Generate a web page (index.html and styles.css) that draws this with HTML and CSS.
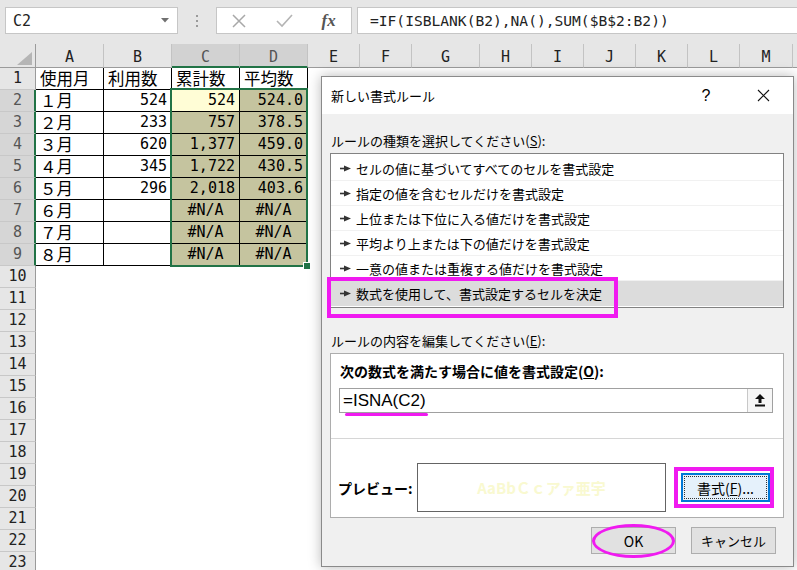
FILE: index.html
```html
<!DOCTYPE html>
<html lang="ja">
<head>
<meta charset="utf-8">
<title>新しい書式ルール</title>
<link rel="stylesheet" href="styles.css">
</head>
<body>
<div class="fbar">
  <div class="namebox"><span class="nb-text">C2</span><svg class="nb-arrow" width="8" height="5" viewBox="0 0 8 5"><polygon points="0,0 8,0 4,4.5" fill="#707070"/></svg></div>
  <div class="grip"><i></i><i></i><i></i></div>
  <div class="fxbox">
    <span class="slot"><svg width="16" height="16" viewBox="0 0 16 16"><path d="M2 2 L14 14 M14 2 L2 14" stroke="#a8a8a8" stroke-width="1.5" fill="none"/></svg></span>
    <span class="slot"><svg width="17" height="15" viewBox="0 0 17 15"><path d="M1 8 L6 13 L16 2" stroke="#b4b4b4" stroke-width="1.6" fill="none"/></svg></span>
    <span class="slot"><span class="fx">fx</span></span>
  </div>
  <div class="formula">=IF(ISBLANK(B2),NA(),SUM($B$2:B2))</div>
</div>

<div class="sheet">
  <div class="row hrow">
    <div class="corner"><svg width="15" height="13" viewBox="0 0 15 13"><polygon points="15,0 15,13 0,13" fill="#b5b5b5"/></svg></div>
    <div class="ch w68">A</div><div class="ch w68">B</div><div class="ch w68 sel">C</div><div class="ch w68 sel">D</div>
    <div class="ch w52">E</div><div class="ch w52">F</div><div class="ch w68">G</div><div class="ch w52">H</div>
    <div class="ch w52">I</div><div class="ch w52">J</div><div class="ch w52">K</div><div class="ch w52">L</div><div class="ch w53">M</div><div class="ch fill"></div>
  </div>
  <div class="row"><div class="rh">1</div><div class="c w68 bd">使用月</div><div class="c w68 bd">利用数</div><div class="c w68 bd">累計数</div><div class="c w68 bd">平均数</div><div class="fill"></div></div>
  <div class="row"><div class="rh sel">2</div><div class="c w68 bd">１月</div><div class="c w68 bd num">524</div><div class="c w68 bd num act">524</div><div class="c w68 bd num ol">524.0</div><div class="fill"></div></div>
  <div class="row"><div class="rh sel">3</div><div class="c w68 bd">２月</div><div class="c w68 bd num">233</div><div class="c w68 bd num ol">757</div><div class="c w68 bd num ol">378.5</div><div class="fill"></div></div>
  <div class="row"><div class="rh sel">4</div><div class="c w68 bd">３月</div><div class="c w68 bd num">620</div><div class="c w68 bd num ol">1,377</div><div class="c w68 bd num ol">459.0</div><div class="fill"></div></div>
  <div class="row"><div class="rh sel">5</div><div class="c w68 bd">４月</div><div class="c w68 bd num">345</div><div class="c w68 bd num ol">1,722</div><div class="c w68 bd num ol">430.5</div><div class="fill"></div></div>
  <div class="row"><div class="rh sel">6</div><div class="c w68 bd">５月</div><div class="c w68 bd num">296</div><div class="c w68 bd num ol">2,018</div><div class="c w68 bd num ol">403.6</div><div class="fill"></div></div>
  <div class="row"><div class="rh sel">7</div><div class="c w68 bd">６月</div><div class="c w68 bd"></div><div class="c w68 bd err ol">#N/A</div><div class="c w68 bd err ol">#N/A</div><div class="fill"></div></div>
  <div class="row"><div class="rh sel">8</div><div class="c w68 bd">７月</div><div class="c w68 bd"></div><div class="c w68 bd err ol">#N/A</div><div class="c w68 bd err ol">#N/A</div><div class="fill"></div></div>
  <div class="row"><div class="rh sel">9</div><div class="c w68 bd">８月</div><div class="c w68 bd"></div><div class="c w68 bd err ol">#N/A</div><div class="c w68 bd err ol">#N/A</div><div class="fill"></div></div>
  <div class="row"><div class="rh">10</div><div class="fill"></div></div>
  <div class="row"><div class="rh">11</div><div class="fill"></div></div>
  <div class="row"><div class="rh">12</div><div class="fill"></div></div>
  <div class="row"><div class="rh">13</div><div class="fill"></div></div>
  <div class="row"><div class="rh">14</div><div class="fill"></div></div>
  <div class="row"><div class="rh">15</div><div class="fill"></div></div>
  <div class="row"><div class="rh">16</div><div class="fill"></div></div>
  <div class="row"><div class="rh">17</div><div class="fill"></div></div>
  <div class="row"><div class="rh">18</div><div class="fill"></div></div>
  <div class="row"><div class="rh">19</div><div class="fill"></div></div>
  <div class="row"><div class="rh">20</div><div class="fill"></div></div>
  <div class="row"><div class="rh">21</div><div class="fill"></div></div>
  <div class="row"><div class="rh">22</div><div class="fill"></div></div>
  <div class="row"><div class="rh">23</div><div class="fill"></div></div>
  <div class="selection"></div>
  <div class="handle"></div>
</div>

<div class="dialog">
  <div class="dlg-title">
    <span class="dlg-name">新しい書式ルール</span>
    <span class="dlg-help">?</span>
    <span class="dlg-close"><svg width="13" height="13" viewBox="0 0 13 13"><path d="M1 1 L12 12 M12 1 L1 12" stroke="#111" stroke-width="1.1" fill="none"/></svg></span>
  </div>
  <div class="dlg-body">
    <div class="lbl">ルールの種類を選択してください(<u>S</u>):</div>
    <ul class="rule-list">
      <li><svg class="tri" width="11" height="7" viewBox="0 0 11 7"><rect x="0" y="2.7" width="5" height="1.6" fill="#333"/><polygon points="4,0.5 11,3.5 4,6.5" fill="#333"/></svg>セルの値に基づいてすべてのセルを書式設定</li>
      <li><svg class="tri" width="11" height="7" viewBox="0 0 11 7"><rect x="0" y="2.7" width="5" height="1.6" fill="#333"/><polygon points="4,0.5 11,3.5 4,6.5" fill="#333"/></svg>指定の値を含むセルだけを書式設定</li>
      <li><svg class="tri" width="11" height="7" viewBox="0 0 11 7"><rect x="0" y="2.7" width="5" height="1.6" fill="#333"/><polygon points="4,0.5 11,3.5 4,6.5" fill="#333"/></svg>上位または下位に入る値だけを書式設定</li>
      <li><svg class="tri" width="11" height="7" viewBox="0 0 11 7"><rect x="0" y="2.7" width="5" height="1.6" fill="#333"/><polygon points="4,0.5 11,3.5 4,6.5" fill="#333"/></svg>平均より上または下の値だけを書式設定</li>
      <li><svg class="tri" width="11" height="7" viewBox="0 0 11 7"><rect x="0" y="2.7" width="5" height="1.6" fill="#333"/><polygon points="4,0.5 11,3.5 4,6.5" fill="#333"/></svg>一意の値または重複する値だけを書式設定</li>
      <li class="picked"><svg class="tri" width="11" height="7" viewBox="0 0 11 7"><rect x="0" y="2.7" width="5" height="1.6" fill="#333"/><polygon points="4,0.5 11,3.5 4,6.5" fill="#333"/></svg>数式を使用して、書式設定するセルを決定</li>
    </ul>
    <div class="lbl lbl2">ルールの内容を編集してください(<u>E</u>):</div>
    <div class="panel">
      <div class="panel-top">
        <div class="blbl">次の数式を満たす場合に値を書式設定(<u>O</u>):</div>
        <div class="input">
          <span class="input-text">=ISNA(C2)</span>
          <span class="collapse"><svg width="10" height="13" viewBox="0 0 10 13"><polygon points="5,0 10,5 6.5,5 6.5,9 3.5,9 3.5,5 0,5" fill="#111"/><rect x="0" y="10.5" width="10" height="2" fill="#111"/></svg></span>
        </div>
      </div>
      <div class="panel-bottom">
        <span class="blbl plbl">プレビュー:</span>
        <div class="preview">AaBbＣｃアァ亜宇</div>
        <span class="fmt-btn">書式(<u>F</u>)...</span>
      </div>
    </div>
    <div class="buttons">
      <span class="btn">OK</span>
      <span class="btn btn-cancel">キャンセル</span>
    </div>
  </div>
  <div class="mark mark-rule"></div>
  <div class="mark mark-fmt"></div>
  <div class="mark mark-ok"></div>
  <div class="mark-line"></div>
</div>
</body>
</html>
```

FILE: styles.css
```css
* { box-sizing: border-box; margin: 0; padding: 0; }
html, body { width: 797px; height: 570px; overflow: hidden; background: #fff; }
body { position: relative; font-family: "Noto Sans CJK JP", sans-serif; color: #000; }

/* formula bar */
.fbar { display: flex; align-items: flex-start; height: 44px; padding: 7px 0 0 5px; background: #e6e6e6; }
.namebox { width: 173px; height: 27px; flex: none; background: #fff; border: 1px solid #c6c6c6; display: flex; align-items: center; justify-content: space-between; padding: 0 8px 0 7px; }
.nb-text { font: 15px "DejaVu Sans Mono", monospace; color: #222; }
.grip { width: 38px; height: 27px; flex: none; display: flex; flex-direction: column; align-items: center; justify-content: center; gap: 3px; }
.grip i { display: block; width: 2px; height: 2px; background: #9a9a9a; }
.fxbox { width: 136px; height: 27px; flex: none; background: #fff; border: 1px solid #c6c6c6; display: flex; }
.slot { width: 45px; display: flex; align-items: center; justify-content: center; }
.fx { font: italic bold 17px "Liberation Serif", serif; color: #555; line-height: 20px; }
.formula { flex: 1; margin-left: 5px; height: 27px; background: #fff; border: 1px solid #c6c6c6; border-right: none; padding-left: 12px; font: 14.6px "DejaVu Sans Mono", monospace; line-height: 25px; color: #222; white-space: nowrap; }

/* sheet */
.sheet { position: relative; }
.row { display: flex; height: 22px; }
.hrow { height: 24px; }
.corner { width: 36px; flex: none; background: #e6e6e6; border-right: 1px solid #9b9b9b; border-bottom: 1px solid #9b9b9b; display: flex; align-items: flex-end; justify-content: flex-end; padding: 0 3px 2px 0; }
.ch { flex: none; background: #e6e6e6; border-right: 1px solid #c3c3c3; border-bottom: 1px solid #9b9b9b; text-align: center; font: 15px "DejaVu Sans Mono", monospace; line-height: 19px; padding-top: 4px; color: #222; }
.ch.sel { background: #d2d2d2; border-bottom: 2px solid #217346; color: #555; }
.w68 { width: 68px; }
.w52 { width: 52px; }
.w53 { width: 53px; }
.fill { flex: 1; }
.ch.fill { border-right: none; }
.rh { width: 36px; flex: none; background: #e6e6e6; border-right: 1px solid #9b9b9b; border-bottom: 1px solid #c8c8c8; text-align: center; font: 15px "DejaVu Sans Mono", monospace; line-height: 21px; color: #222; }
.rh.sel { background: #d6d6d6; border-right: 2px solid #217346; color: #555; padding-left: 1px; }
.c { flex: none; font-size: 16.5px; line-height: 21px; padding: 0 4px; white-space: nowrap; }
.bd { border-right: 1px solid #000; border-bottom: 1px solid #000; }
.num { text-align: right; font: 15px "DejaVu Sans Mono", monospace; line-height: 21px; }
.err { text-align: center; font: 15px "DejaVu Sans Mono", monospace; line-height: 21px; }
.ol { background: #c5c49f; }
.act { background: #fffdd6; }
.selection { position: absolute; left: 170px; top: 44px; width: 138px; height: 179px; border: 2px solid #217346; }
.handle { position: absolute; left: 303px; top: 218px; width: 8px; height: 8px; background: #217346; border: 1px solid #fff; }

/* dialog */
.dialog { position: absolute; left: 321px; top: 76px; width: 473px; height: 491px; border: 1px solid #8a8a8a; background: #f0f0f0; box-shadow: 0 0 12px rgba(0,0,0,0.28); }
.dlg-title { height: 37px; background: #fff; display: flex; align-items: center; padding: 0 12px 0 9px; }
.dlg-name { flex: 1; font-size: 13px; line-height: 18px; }
.dlg-help { width: 24px; text-align: center; font: 16px "Liberation Sans", sans-serif; }
.dlg-close { width: 36px; margin-left: 27px; display: flex; justify-content: center; }
.dlg-body { padding: 0 9px 0 8px; }
.lbl { font-size: 13px; line-height: 18px; margin-top: 18px; padding-left: 1px; }
.lbl2 { margin-top: 24px; }
.rule-list { list-style: none; margin-top: 3px; height: 155px; background: #fff; border: 1px solid #828282; padding-top: 2px; }
.rule-list li { height: 25px; display: flex; align-items: center; padding-left: 9px; font-size: 13px; border-bottom: 1px solid #f1f1f1; }
.rule-list li.picked { background: #dcdcdc; border-bottom: none; }
.tri { margin-right: 5px; flex: none; }
.panel { margin-top: 3px; background: #fff; border: 1px solid #adadad; }
.panel-top { height: 85px; border-bottom: 1px solid #d6d6d6; padding: 8px 0 0 8px; }
.blbl { font-size: 14px; font-weight: 700; line-height: 18px; padding-left: 1px; }
.input { margin-top: 8px; width: 434px; height: 25px; border: 1px solid #a0a0a0; display: flex; align-items: center; justify-content: space-between; padding-left: 3px; }
.input-text { font: 17px "Liberation Sans", sans-serif; line-height: 20px; }
.collapse { width: 25px; height: 23px; background: #f6f6f6; border-left: 1px solid #c8c8c8; display: flex; align-items: center; justify-content: center; }
.panel-bottom { display: flex; align-items: center; padding: 24px 0 5px 7px; }
.plbl { width: 79px; flex: none; padding-left: 0; }
.preview { width: 249px; height: 49px; flex: none; border: 1px solid #646464; display: flex; align-items: center; justify-content: center; font-size: 15px; font-weight: 700; color: #f9f9d0; }
.fmt-btn { margin-left: 15px; width: 89px; height: 29px; flex: none; background: #e5f1fb; border: 2px solid #0078d7; display: flex; align-items: center; justify-content: center; font-size: 14px; position: relative; }
.fmt-btn::after { content: ""; position: absolute; inset: 1px; border: 1px dotted #333; }
.buttons { display: flex; justify-content: flex-end; gap: 15px; margin-top: 9px; padding-right: 8px; }
.btn { width: 85px; height: 27px; background: #e1e1e1; border: 1px solid #adadad; display: flex; align-items: center; justify-content: center; font-size: 14px; }
.btn-cancel { font-size: 13px; }

.mark { position: absolute; border: 4px solid #f01af0; }
.mark-rule { left: 5px; top: 200px; width: 291px; height: 41px; }
.mark-fmt { left: 352px; top: 390px; width: 100px; height: 41px; }
.mark-ok { left: 270px; top: 447px; width: 83px; height: 34px; border-width: 3px; border-radius: 50%; }
.mark-line { position: absolute; left: 23px; top: 336px; width: 83px; height: 3px; border-radius: 2px; background: #f01af0; }
```
